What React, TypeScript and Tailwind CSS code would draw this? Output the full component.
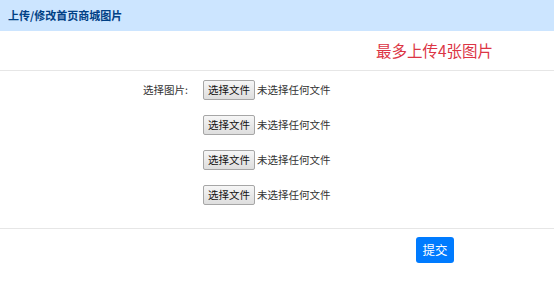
import React from "react";

const rows = [0, 1, 2, 3];

export default function App() {
  return (
    <div className="w-[554px] h-[283px] bg-white font-['Microsoft_YaHei','Noto_Sans_CJK_SC',sans-serif] text-[#333]">
      <div className="h-[31px] bg-[#cce5ff] flex items-center pl-2">
        <h1 className="text-[11px] font-bold text-[#004085]">上传/修改首页商城图片</h1>
      </div>
      <div className="h-[40px] border-b border-[#e6e6e6] flex items-center pl-[376px]">
        <span className="text-[15.5px] text-[#dc3545]">最多上传4张图片</span>
      </div>
      <div className="pt-[9px] pb-[23px] border-b border-[#e6e6e6] flex flex-col gap-[15px]">
        {rows.map((i) => (
          <div key={i} className="flex items-center h-[20px]">
            <div className="w-[188px] text-right text-[10.5px]">{i === 0 ? "选择图片:" : ""}</div>
            <button className="ml-[15px] w-[52px] h-[20px] text-[10.5px] text-[#111] bg-gradient-to-b from-[#f6f6f6] to-[#dedede] border border-[#a6a6a6] rounded-[2px]">
              选择文件
            </button>
            <span className="ml-[2px] text-[10.5px]">未选择任何文件</span>
          </div>
        ))}
      </div>
      <div className="pt-[7px] pl-[416px]">
        <button className="w-[38px] h-[26px] bg-[#007bff] text-white text-[12.5px] rounded-[3px]">提交</button>
      </div>
    </div>
  );
}
